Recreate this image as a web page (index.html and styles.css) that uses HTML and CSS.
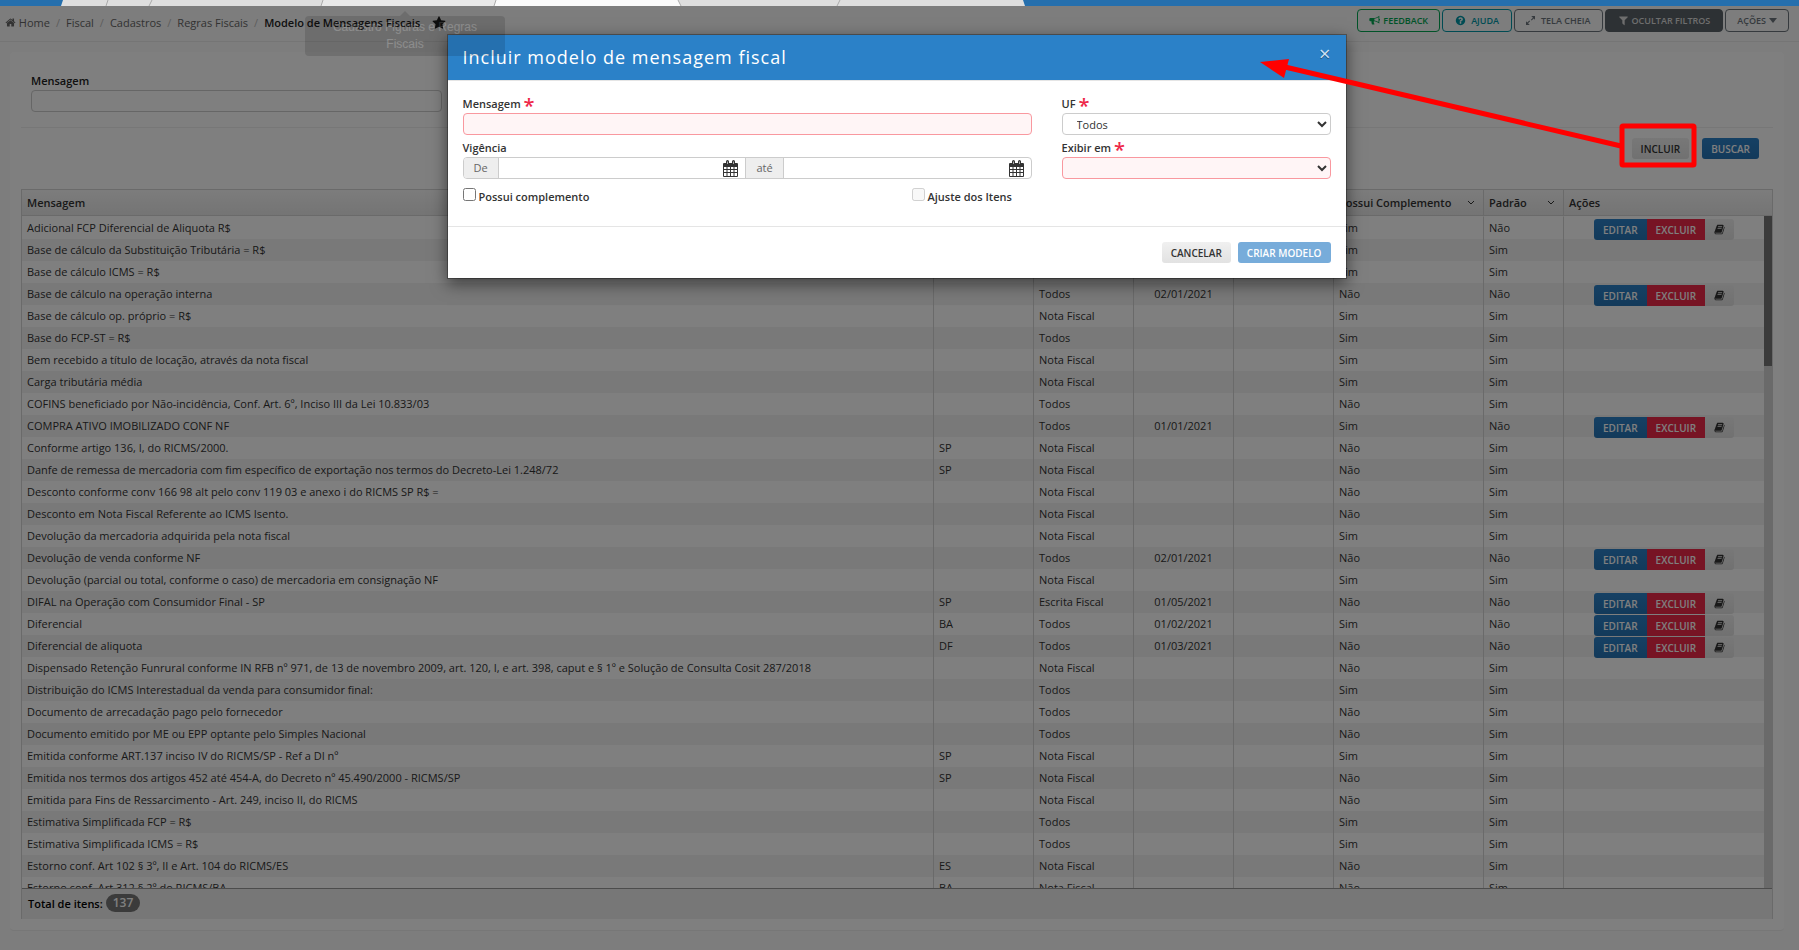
FILE: index.html
```html
<!DOCTYPE html>
<html lang="pt-BR">
<head>
  <meta charset="UTF-8">
  <title>Modelo de Mensagens Fiscais</title>
  <link rel="stylesheet" href="styles.css">
</head>
<body>

  <!-- Icons -->
  <svg class="sprite" aria-hidden="true">
    <symbol id="i-home" viewBox="0 0 1792 1792"><path d="M1472 992v480q0 26-19 45t-45 19h-384v-384h-256v384h-384q-26 0-45-19t-19-45v-480q0-1 .5-3t.5-3l575-474 575 474q1 2 1 6zm223-69l-62 74q-8 9-21 11h-3q-13 0-21-7l-692-577-692 577q-12 8-24 7-13-2-21-11l-62-74q-8-10-7-23.500t11-21.500l719-599q32-26 76-26t76 26l244 204v-195q0-14 9-23t23-9h192q14 0 23 9t9 23v408l219 182q10 8 11 21.500t-7 23.500z"/></symbol>
    <symbol id="i-star" viewBox="0 0 1792 1792"><path d="M1728 647q0 22-26 48l-363 354 86 500q1 7 1 20 0 21-10.500 35.500t-30.500 14.500q-19 0-40-12l-449-236-449 236q-22 12-40 12-21 0-31.500-14.500t-10.500-35.500q0-6 2-20l86-500-364-354q-25-27-25-48 0-37 56-46l502-73 225-455q19-41 49-41t49 41l225 455 502 73q56 9 56 46z"/></symbol>
    <symbol id="i-filter" viewBox="0 0 1792 1792"><path d="M1595 295q17 41-14 70l-493 493v742q0 42-39 59-13 5-25 5-27 0-45-19l-256-256q-19-19-19-45v-486l-493-493q-31-29-14-70 17-39 59-39h1280q42 0 59 39z"/></symbol>
    <symbol id="i-caret" viewBox="0 0 10 6"><path d="M0 0h10l-5 6z"/></symbol>
    <symbol id="i-help" viewBox="0 0 1792 1792"><path d="M1024 1376v-192q0-14-9-23t-23-9h-192q-14 0-23 9t-9 23v192q0 14 9 23t23 9h192q14 0 23-9t9-23zm256-672q0-88-55.500-163t-138.500-116-170-41q-243 0-371 213-15 24 8 42l132 100q7 6 19 6 16 0 25-12 53-68 86-92 34-24 86-24 48 0 85.500 26t37.500 59q0 38-20 61t-68 45q-63 28-115.500 86.500t-52.500 125.500v36q0 14 9 23t23 9h192q14 0 23-9t9-23q0-19 21.500-49.500t54.500-49.500q32-18 49-28.500t46-35 44.500-48 28-60.500 12.500-81zm384 192q0 209-103 385.500t-279.500 279.500-385.500 103-385.500-103-279.500-279.500-103-385.500 103-385.500 279.500-279.500 385.500-103 385.500 103 279.500 279.500 103 385.500z"/></symbol>
    <symbol id="i-horn" viewBox="0 0 16 16"><path d="M15 1v4.600a1.200 1.200 0 0 1 0 2.400v4.500c-2.400-2-5-3.200-7.500-3.400-.8.300-1 1.300-.3 1.900-.4.800.2 1.400 1 2-.7 1.200-3 1.300-4 .3-.4-1.400-1-2.700-.5-4.200H2A1.500 1.500 0 0 1 .5 7.600V5.900A1.500 1.500 0 0 1 2 4.400h4.500C9.300 4.400 12.200 3.200 15 1zm-1.200 2.300c-1.900 1.300-4 2.100-6 2.300v2.400c2 .2 4.100 1 6 2.300z"/></symbol>
    <symbol id="i-expand" viewBox="0 0 12 12"><path d="M7 0h5v5l-1.700-1.700-2.800 2.800-1-1 2.800-2.800zM5 12H0V7l1.700 1.700 2.800-2.800 1 1-2.800 2.800z"/></symbol>
    <symbol id="i-angle" viewBox="0 0 8 6"><path d="M1 1l3 3 3-3" fill="none" stroke="currentColor" stroke-width="1"/></symbol>
    <symbol id="i-calendar" viewBox="0 0 15 17"><path d="M1 3h2V1.500a1.500 1.500 0 0 1 3 0V3h3V1.500a1.500 1.500 0 0 1 3 0V3h2a1 1 0 0 1 1 1v12a1 1 0 0 1-1 1H1a1 1 0 0 1-1-1V4a1 1 0 0 1 1-1zm0 4v2h2.500V7zm3.500 0v2H7V7zM8 7v2h2.500V7zm3.500 0v2H14V7zM1 10v2h2.500v-2zm3.500 0v2H7v-2zM8 10v2h2.500v-2zm3.500 0v2H14v-2zM1 13v3h2.500v-3zm3.500 0v3H7v-3zM8 13v3h2.500v-3zm3.500 0v3H14v-3zM4.200 1.500v2.500h.6V1.500zm6 0v2.500h.6V1.500z" fill-rule="evenodd"/></symbol>
    <symbol id="i-book" viewBox="0 0 1792 1792"><path d="M1703 478q40 57 18 129l-275 906q-19 64-76.500 107.500t-122.500 43.500h-923q-77 0-148.500-53.500t-99.500-131.500q-24-67-2-127 0-4 3-27t4-37q1-8-3-21.500t-3-19.500q2-11 8-21t16.500-23.500 16.500-23.500q23-38 45-91.500t30-91.500q3-10 .5-30t-.5-28q3-11 17-28t17-23q21-36 42-92t25-90q1-9-2.500-32t.5-28q4-13 22-30.500t22-22.500q19-26 42.500-84.500t27.500-96.500q1-8-3-25.500t-2-26.500q2-8 9-18t18-23 17-21q8-12 16.500-30.500t15-35 16-36 19.500-32 26.500-23.500 36-11.500 47.500 5.500l-1 3q38-9 51-9h761q74 0 114 56t18 130l-274 906q-36 119-71.500 153.500t-128.500 34.500h-869q-27 0-38 15-11 16-1 43 24 70 144 70h923q29 0 56-15.500t35-41.500l300-987q7-22 5-57 38 15 59 43zm-1064 2q-4 13 2 22.500t20 9.500h608q13 0 25.500-9.500t16.500-22.500l21-64q4-13-2-22.500t-20-9.500h-608q-13 0-25.500 9.500t-16.500 22.500zm-83 256q-4 13 2 22.500t20 9.500h608q13 0 25.500-9.500t16.500-22.500l21-64q4-13-2-22.500t-20-9.500h-608q-13 0-25.500 9.500t-16.500 22.500z"/></symbol>
  </svg>

  <div class="tabstrip">
    <svg width="1030" height="6" viewBox="0 0 1030 6" aria-hidden="true">
      <path d="M63 0H1023L1025 6H61z" fill="#dedede"/>
      <path d="M323 0H500V6H321z" fill="#e8e8e8"/>
      <path d="M496 0H678L681 6H494z" fill="#fafafa"/>
      <path d="M108 0L106 6M152 0L149 6M323 0L321 6M496 0L494 6M678 0L681 6M840 0L837 6" stroke="#aaa" fill="none"/>
    </svg>
  </div>

  <div class="page">
    <header class="topbar">
      <nav class="breadcrumb">
        <a href="#"><svg class="icon"><use href="#i-home"/></svg> Home</a>
        <a href="#">Fiscal</a>
        <a href="#">Cadastros</a>
        <a href="#">Regras Fiscais</a>
        <strong>Modelo de Mensagens Fiscais</strong>
        <svg class="icon star"><use href="#i-star"/></svg>
      </nav>
      <div class="toolbar">
        <button class="tool tool-green"><svg class="icon"><use href="#i-horn"/></svg>Feedback</button>
        <button class="tool tool-teal"><svg class="icon"><use href="#i-help"/></svg>Ajuda</button>
        <button class="tool tool-gray"><svg class="icon expand"><use href="#i-expand"/></svg>Tela cheia</button>
        <button class="tool tool-dark"><svg class="icon"><use href="#i-filter"/></svg>Ocultar filtros</button>
        <button class="tool tool-gray">Ações<svg class="caret"><use href="#i-caret"/></svg></button>
      </div>
    </header>

    <main class="panel">
      <div class="filter">
        <label for="filtro">Mensagem</label>
        <input type="text" id="filtro" class="field">
      </div>
      <div class="actions">
        <button class="btn btn-default" id="incluir">Incluir</button>
        <button class="btn btn-primary">Buscar</button>
      </div>

      <div class="grid">
        <div class="grid-view">
          <table>
            <colgroup>
              <col><col class="c100"><col class="c100"><col class="c100"><col class="c100"><col class="c150"><col class="c80"><col class="c200">
            </colgroup>
            <thead>
              <tr>
                <th>Mensagem</th>
                <th>UF</th>
                <th>Exibir em</th>
                <th>De</th>
                <th>Até</th>
                <th><div class="sort">Possui Complemento <svg class="angle"><use href="#i-angle"/></svg></div></th>
                <th><div class="sort">Padrão <svg class="angle"><use href="#i-angle"/></svg></div></th>
                <th>Ações</th>
              </tr>
            </thead>
            <tbody id="rows"></tbody>
          </table>
          <div class="scroll"><div class="thumb"></div></div>
        </div>
        <div class="grid-footer">Total de itens: <span class="badge">137</span></div>
      </div>
    </main>
  </div>

  <div class="backdrop"></div>

  <div class="modal" role="dialog" aria-labelledby="titulo">
    <div class="modal-header">
      <h4 id="titulo">Incluir modelo de mensagem fiscal</h4>
      <button class="close" aria-label="Fechar">×</button>
    </div>
    <form class="modal-body">
      <div class="col">
        <label for="mensagem">Mensagem <span class="req">*</span></label>
        <input type="text" id="mensagem" class="field invalid">
        <label for="de">Vigência</label>
        <div class="group">
          <span class="addon">De</span>
          <div class="date"><input type="text" id="de"><svg class="cal"><use href="#i-calendar"/></svg></div>
          <label class="addon addon-mid" for="ate">até</label>
          <div class="date"><input type="text" id="ate"><svg class="cal"><use href="#i-calendar"/></svg></div>
        </div>
        <div class="checks">
          <label><input type="checkbox"><span>Possui complemento</span></label>
          <label><input type="checkbox" disabled><span>Ajuste dos Itens</span></label>
        </div>
      </div>
      <div class="col">
        <label for="uf">UF <span class="req">*</span></label>
        <select id="uf" class="field"><option>Todos</option></select>
        <label for="exibir">Exibir em <span class="req">*</span></label>
        <select id="exibir" class="field invalid"><option></option></select>
      </div>
    </form>
    <div class="modal-footer">
      <button class="btn btn-default">Cancelar</button>
      <button class="btn btn-primary" disabled>Criar modelo</button>
    </div>
  </div>

  <div class="tooltip">Cadastro Figuras e Regras Fiscais</div>

  <!-- Arrow from the Incluir button to the dialog -->
  <svg class="mark" width="440" height="112" viewBox="0 0 440 112" aria-hidden="true">
    <rect x="363" y="66" width="72" height="39" rx="1" fill="none" stroke="#f00" stroke-width="5"/>
    <path d="M362 86L26 7" stroke="#f00" stroke-width="5"/>
    <path d="M1 2L30 -1L25 18z" fill="#f00"/>
  </svg>

  <script>
    // mensagem, uf, exibir em, de, complemento, padrão
    const rows = [
      ["Adicional FCP Diferencial de Aliquota R$", "", "Todos", "", "Sim", "Não"],
      ["Base de cálculo da Substituição Tributária = R$", "", "Todos", "", "Sim", "Sim"],
      ["Base de cálculo ICMS = R$", "", "Todos", "", "Sim", "Sim"],
      ["Base de cálculo na operação interna", "", "Todos", "02/01/2021", "Não", "Não"],
      ["Base de cálculo op. próprio = R$", "", "Nota Fiscal", "", "Sim", "Sim"],
      ["Base do FCP-ST = R$", "", "Todos", "", "Sim", "Sim"],
      ["Bem recebido a título de locação, através da nota fiscal", "", "Nota Fiscal", "", "Sim", "Sim"],
      ["Carga tributária média", "", "Nota Fiscal", "", "Sim", "Sim"],
      ["COFINS beneficiado por Não-incidência, Conf. Art. 6º, Inciso III da Lei 10.833/03", "", "Todos", "", "Não", "Sim"],
      ["COMPRA ATIVO IMOBILIZADO CONF NF", "", "Todos", "01/01/2021", "Sim", "Não"],
      ["Conforme artigo 136, I, do RICMS/2000.", "SP", "Nota Fiscal", "", "Não", "Sim"],
      ["Danfe de remessa de mercadoria com fim específico de exportação nos termos do Decreto-Lei 1.248/72", "SP", "Nota Fiscal", "", "Não", "Sim"],
      ["Desconto conforme conv 166 98 alt pelo conv 119 03 e anexo i do RICMS SP R$ =", "", "Nota Fiscal", "", "Não", "Sim"],
      ["Desconto em Nota Fiscal Referente ao ICMS Isento.", "", "Nota Fiscal", "", "Não", "Sim"],
      ["Devolução da mercadoria adquirida pela nota fiscal", "", "Nota Fiscal", "", "Sim", "Sim"],
      ["Devolução de venda conforme NF", "", "Todos", "02/01/2021", "Não", "Não"],
      ["Devolução (parcial ou total, conforme o caso) de mercadoria em consignação NF", "", "Nota Fiscal", "", "Sim", "Sim"],
      ["DIFAL na Operação com Consumidor Final - SP", "SP", "Escrita Fiscal", "01/05/2021", "Não", "Não"],
      ["Diferencial", "BA", "Todos", "01/02/2021", "Sim", "Não"],
      ["Diferencial de aliquota", "DF", "Todos", "01/03/2021", "Não", "Não"],
      ["Dispensado Retenção Funrural conforme IN RFB nº 971, de 13 de novembro 2009, art. 120, I, e art. 398, caput e § 1º e Solução de Consulta Cosit 287/2018", "", "Nota Fiscal", "", "Não", "Sim"],
      ["Distribuição do ICMS Interestadual da venda para consumidor final:", "", "Todos", "", "Sim", "Sim"],
      ["Documento de arrecadação pago pelo fornecedor", "", "Todos", "", "Não", "Sim"],
      ["Documento emitido por ME ou EPP optante pelo Simples Nacional", "", "Todos", "", "Não", "Sim"],
      ["Emitida conforme ART.137 inciso IV do RICMS/SP - Ref a DI nº", "SP", "Nota Fiscal", "", "Sim", "Sim"],
      ["Emitida nos termos dos artigos 452 até 454-A, do Decreto nº 45.490/2000 - RICMS/SP", "SP", "Nota Fiscal", "", "Não", "Sim"],
      ["Emitida para Fins de Ressarcimento - Art. 249, inciso II, do RICMS", "", "Nota Fiscal", "", "Não", "Sim"],
      ["Estimativa Simplificada FCP = R$", "", "Todos", "", "Sim", "Sim"],
      ["Estimativa Simplificada ICMS = R$", "", "Todos", "", "Sim", "Sim"],
      ["Estorno conf. Art 102 § 3º, II e Art. 104 do RICMS/ES", "ES", "Nota Fiscal", "", "Não", "Sim"],
      ["Estorno conf. Art 312 § 2º do RICMS/BA", "BA", "Nota Fiscal", "", "Não", "Sim"]
    ];

    const buttons = `<div class="row-buttons">
      <button class="btn btn-primary">Editar</button>
      <button class="btn btn-danger">Excluir</button>
      <button class="btn btn-default" aria-label="Histórico"><svg class="book"><use href="#i-book"/></svg></button>
    </div>`;

    // Only custom messages (padrão = Não) can be edited
    document.getElementById("rows").innerHTML = rows.map(r => `<tr>
      <td>${r[0]}</td><td>${r[1]}</td><td>${r[2]}</td><td class="center">${r[3]}</td><td></td>
      <td>${r[4]}</td><td>${r[5]}</td><td>${r[5] === "Não" ? buttons : ""}</td>
    </tr>`).join("");
  </script>

</body>
</html>
```
FILE: styles.css
```css
* {
  box-sizing: border-box;
}

body {
  margin: 0;
  height: 100vh;
  display: flex;
  flex-direction: column;
  overflow: hidden;
  background: #fafafa;
  color: #333;
  font-family: "Open Sans", sans-serif;
  font-size: 11px;
}

button, input, select {
  font-family: inherit;
}

svg {
  fill: currentColor;
}

.sprite {
  display: none;
}

.tabstrip {
  height: 6px;
  background: #256fad;
}

.tabstrip svg {
  display: block;
}

.page {
  flex: 1;
  min-height: 0;
  display: flex;
  flex-direction: column;
}

/* Top bar */
.topbar {
  height: 36px;
  padding: 0 10px 2px 5px;
  display: flex;
  align-items: center;
  justify-content: space-between;
  border-bottom: 1px solid #ebebeb;
}

.breadcrumb {
  display: flex;
  align-items: center;
}

.breadcrumb a {
  color: #666;
  text-decoration: none;
}

.breadcrumb a::after {
  content: "/";
  padding: 0 6px;
  color: #bbb;
}

.breadcrumb strong {
  color: #222;
  font-weight: 600;
}

.icon {
  width: 11px;
  height: 11px;
  vertical-align: -1px;
}

.star {
  width: 14px;
  height: 14px;
  margin-left: 12px;
  color: #222;
}

.toolbar {
  display: flex;
  gap: 2px;
  margin-top: -4px;
}

.tool {
  height: 23px;
  padding: 0 11px;
  display: flex;
  align-items: center;
  gap: 3px;
  background: transparent;
  border: 1px solid;
  border-radius: 4px;
  font-size: 9px;
  font-weight: 600;
  text-transform: uppercase;
}

.tool-green {
  color: #00a651;
}

.tool-teal {
  gap: 5px;
  padding: 0 12px;
  color: #0097a7;
}

.tool-gray {
  color: #6c757d;
}

.tool-dark {
  padding: 0 12px;
  background: #5a6268;
  border-color: #5a6268;
  color: #ddd;
}

.expand {
  width: 9px;
  height: 9px;
  margin-right: 3px;
}

.caret {
  width: 8px;
  height: 5px;
}

/* Panel */
.panel {
  flex: 1;
  min-height: 0;
  margin: 10px 15px 19px 10px;
  padding: 0 11px 11px;
  display: flex;
  flex-direction: column;
  background: #fff;
  border-bottom: 1px solid #eee;
  border-radius: 4px;
}

.filter {
  height: 76px;
  padding: 20px 10px 0;
  border-bottom: 1px solid #eee;
}

.filter label {
  display: block;
  line-height: 18px;
  color: #222;
  font-weight: 600;
}

.filter .field {
  width: calc(25% - 22px);
  background: transparent;
}

.field {
  display: block;
  width: 100%;
  height: 22px;
  padding: 0 10px;
  background: #fff;
  border: 1px solid #ccc;
  border-radius: 4px;
  color: #333;
  font-size: 11px;
}

.invalid {
  background: #fff5f6;
  border-color: #f9989f;
}

.actions {
  padding: 10px 14px 30px;
  display: flex;
  justify-content: flex-end;
  gap: 13px;
}

.btn {
  height: 21px;
  padding: 0 9px;
  border: 0;
  border-radius: 3px;
  font-size: 10px;
  font-weight: 600;
  text-transform: uppercase;
}

.btn-default {
  background: linear-gradient(#f0f0f0, #e2e2e2);
  color: #333;
}

.btn-primary {
  background: linear-gradient(#2b81c8, #2674b5);
  color: #fff;
}

.btn-primary:disabled {
  background: #77acda;
}

.btn-danger {
  background: #ee2849;
  color: #fff;
}

/* Grid */
.grid {
  flex: 1;
  min-height: 0;
  display: flex;
  flex-direction: column;
  border: 1px solid #d4d4d4;
  border-bottom: 0;
}

.grid-view {
  flex: 1;
  min-height: 0;
  display: flex;
  align-items: stretch;
  overflow: hidden;
}

table {
  flex: 1;
  align-self: flex-start;
  table-layout: fixed;
  border-collapse: separate;
  border-spacing: 0;
}

.c100 {
  width: 100px;
}

.c150 {
  width: 150px;
}

.c80 {
  width: 80px;
}

.c200 {
  width: 200px;
}

th {
  height: 26px;
  padding: 0 5px;
  background: linear-gradient(#f9f9f9, #e9e9e9);
  border-right: 1px solid #d4d4d4;
  border-bottom: 1px solid #d4d4d4;
  font-weight: 600;
  text-align: left;
  white-space: nowrap;
}

.sort {
  display: flex;
  align-items: center;
  justify-content: space-between;
}

.angle {
  width: 8px;
  height: 6px;
  margin-right: 3px;
}

td {
  height: 22px;
  padding: 0 5px;
  border-right: 1px solid #d4d4d4;
  line-height: 22px;
  white-space: nowrap;
}

th:last-child, td:last-child {
  border-right: 0;
}

tbody tr:nth-child(even) {
  background: #f3f3f3;
}

tbody tr:first-child td {
  height: 23px;
  border-top: 1px solid #fff;
}

.center {
  text-align: center;
}

.row-buttons {
  height: 22px;
  padding-top: 2px;
  display: flex;
  justify-content: center;
}

.row-buttons .btn {
  flex-shrink: 0;
  border-radius: 0;
}

.row-buttons .btn:first-child {
  border-radius: 3px 0 0 3px;
}

.row-buttons .btn:last-child {
  border-radius: 0 3px 3px 0;
}

.book {
  display: block;
  width: 11px;
  height: 11px;
}

.scroll {
  width: 8px;
  background: #d4d4d4;
}

.scroll::before {
  content: "";
  display: block;
  height: 25px;
  background: linear-gradient(#f9f9f9, #e9e9e9);
  border-bottom: 1px solid #d4d4d4;
}

.thumb {
  height: 150px;
  background: #777;
}

.grid-footer {
  height: 31px;
  padding: 0 6px 2px;
  display: flex;
  align-items: center;
  gap: 3px;
  background: #eee;
  border-top: 1px solid #999;
  color: #000;
  font-weight: 600;
}

.badge {
  padding: 0 7px;
  background: #777;
  border-radius: 9px;
  color: #fff;
  font-size: 12px;
  line-height: 18px;
}

/* Dialog */
.backdrop {
  position: absolute;
  inset: 6px 0 0;
  background: rgba(0, 0, 0, 0.5);
}

.modal {
  position: absolute;
  top: 34px;
  left: calc(50% - 453px);
  width: 900px;
  background: #fff;
  border: 1px solid rgba(0, 0, 0, 0.3);
  background-clip: padding-box;
  box-shadow: 0 5px 15px rgba(0, 0, 0, 0.5);
}

.modal-header {
  height: 46px;
  padding: 0 15px;
  display: flex;
  justify-content: space-between;
  background: #2b81c8;
  border-bottom: 1px solid #e5e5e5;
  color: #fff;
}

.modal-header h4 {
  margin: 0;
  font-size: 18px;
  font-weight: 400;
  line-height: 44px;
  letter-spacing: 1px;
}

.close {
  height: 36px;
  padding: 0;
  background: none;
  border: 0;
  color: #cfe2f3;
  font-size: 20px;
  text-shadow: 0 1px 0 #1a4f7c;
}

.modal-body {
  height: 146px;
  padding: 14px 15px 0;
  display: grid;
  grid-template-columns: 569px 1fr;
  gap: 30px;
  border-bottom: 1px solid #e5e5e5;
}

.col > label {
  display: block;
  height: 22px;
  line-height: 25px;
  font-weight: 600;
}

.col > label:first-child {
  height: 18px;
  line-height: 18px;
}

.req {
  color: #ee2849;
  font-size: 20px;
  line-height: 16px;
  vertical-align: -5px;
}

.group {
  height: 22px;
  display: flex;
  border: 1px solid #ccc;
  border-radius: 4px;
  overflow: hidden;
}

.addon {
  width: 35px;
  background: #eee;
  border-right: 1px solid #ccc;
  color: #666;
  line-height: 20px;
  text-align: center;
}

.addon-mid {
  width: 39px;
  border-left: 1px solid #ccc;
}

.date {
  flex: 1;
  padding-right: 7px;
  display: flex;
  align-items: center;
}

.date input {
  flex: 1;
  min-width: 0;
  height: 20px;
  padding: 0 8px;
  border: 0;
}

.cal {
  width: 15px;
  height: 17px;
}

.checks {
  margin-top: 9px;
  display: grid;
  grid-template-columns: 449px 1fr;
}

.checks label {
  display: flex;
  align-items: flex-start;
  gap: 3px;
  font-weight: 600;
  line-height: 18px;
}

.checks input {
  margin: 0;
}

.modal-footer {
  padding: 15px;
  display: flex;
  justify-content: flex-end;
  gap: 7px;
}

/* Tooltip of the menu, fading out */
.tooltip {
  position: absolute;
  top: 16px;
  left: 305px;
  width: 200px;
  padding: 3px 8px;
  background: #000;
  border-radius: 4px;
  color: #fff;
  font-family: "Liberation Sans", sans-serif;
  font-size: 12px;
  line-height: 17px;
  text-align: center;
  opacity: 0.12;
}

.tooltip::before {
  content: "";
  position: absolute;
  top: -5px;
  left: 95px;
  border: 5px solid transparent;
  border-top: 0;
  border-bottom-color: #000;
}

.mark {
  position: absolute;
  top: 60px;
  right: 100px;
  overflow: visible;
}
```
